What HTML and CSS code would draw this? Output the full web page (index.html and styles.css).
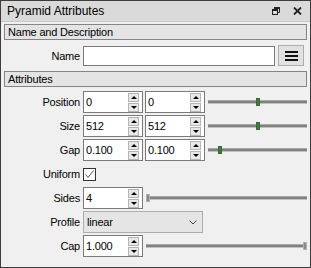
FILE: index.html
```html
<!DOCTYPE html>
<html lang="en">

<head>
    <meta charset="UTF-8">
    <title>Pyramid Attributes</title>
    <link rel="stylesheet" href="styles.css">
</head>

<body>
    <div class="window">
        <div class="titlebar">
            <span class="title">Pyramid Attributes</span>
            <span class="tb_icons">
                <svg width="8" height="8" viewBox="0 0 8 8">
                    <path d="M2.5 2.5V0.5H7.5V5.5H5.5" fill="none" stroke="#222" stroke-width="1" />
                    <rect x="2" y="0" width="6" height="2" fill="#222" />
                    <rect x="0.5" y="2.5" width="5" height="5" fill="none" stroke="#222" stroke-width="1" />
                    <rect x="0" y="2" width="6" height="2" fill="#222" />
                </svg>
                <svg width="9" height="8" viewBox="0 0 9 8">
                    <path d="M1 0.5L8 7.5M8 0.5L1 7.5" stroke="#222" stroke-width="1.8" />
                </svg>
            </span>
        </div>
        <div class="content">
            <div class="section">Name and Description</div>
            <div class="name_row">
                <span class="lbl">Name</span>
                <div class="text_box"></div>
                <div class="menu_btn"><span></span><span></span><span></span></div>
            </div>
            <div class="section sec2">Attributes</div>
            <div class="rows">
                <div class="row">
                    <span class="lbl">Position</span>
                    <div class="spin"><span class="val">0</span><span class="btns"><i class="up"></i><i class="dn"></i></span></div>
                    <div class="spin"><span class="val">0</span><span class="btns"><i class="up"></i><i class="dn"></i></span></div>
                    <div class="slider"><div class="track"></div><div class="handle green" style="--v:0.5"></div></div>
                </div>
                <div class="row">
                    <span class="lbl">Size</span>
                    <div class="spin"><span class="val">512</span><span class="btns"><i class="up"></i><i class="dn"></i></span></div>
                    <div class="spin"><span class="val">512</span><span class="btns"><i class="up"></i><i class="dn"></i></span></div>
                    <div class="slider"><div class="track"></div><div class="handle green" style="--v:0.5"></div></div>
                </div>
                <div class="row">
                    <span class="lbl">Gap</span>
                    <div class="spin"><span class="val">0.100</span><span class="btns"><i class="up"></i><i class="dn"></i></span></div>
                    <div class="spin"><span class="val">0.100</span><span class="btns"><i class="up"></i><i class="dn"></i></span></div>
                    <div class="slider"><div class="track"></div><div class="handle green" style="--v:0.1"></div></div>
                </div>
                <div class="row">
                    <span class="lbl">Uniform</span>
                    <div class="check">
                        <svg width="11" height="11" viewBox="0 0 11 11">
                            <path d="M1.5 5.5L4 8.5L9.5 1.5" fill="none" stroke="#555" stroke-width="1" />
                        </svg>
                    </div>
                </div>
                <div class="row">
                    <span class="lbl">Sides</span>
                    <div class="spin"><span class="val">4</span><span class="btns"><i class="up"></i><i class="dn"></i></span></div>
                    <div class="slider"><div class="track"></div><div class="handle" style="--v:0"></div></div>
                </div>
                <div class="row">
                    <span class="lbl">Profile</span>
                    <div class="combo">
                        <span class="val">linear</span>
                        <svg width="8" height="5" viewBox="0 0 8 5">
                            <path d="M0.5 0.5L4 4L7.5 0.5" fill="none" stroke="#444" stroke-width="1" />
                        </svg>
                    </div>
                </div>
                <div class="row">
                    <span class="lbl">Cap</span>
                    <div class="spin"><span class="val">1.000</span><span class="btns"><i class="up"></i><i class="dn"></i></span></div>
                    <div class="slider"><div class="track"></div><div class="handle" style="--v:1"></div></div>
                </div>
            </div>
        </div>
    </div>
</body>

</html>
```

FILE: styles.css
```css
* {
    box-sizing: border-box;
}

body {
    margin: 0;
    font-family: "Liberation Sans", Arial, sans-serif;
    font-size: 11px;
    color: #000;
}

.window {
    width: 311px;
    height: 268px;
    border: 1px solid #3c3c3c;
    background: #f0f0f0;
}

.titlebar {
    height: 21px;
    background: #dadada;
    border-bottom: 1px solid #c8c8c8;
    display: flex;
    align-items: center;
    padding: 0 8px 0 6px;
}

.title {
    flex: 1;
    font-size: 12px;
}

.tb_icons {
    display: flex;
    align-items: center;
    gap: 13px;
}

.content {
    padding: 2px 3px 0 3px;
    letter-spacing: -0.2px;
}

.section {
    height: 16px;
    border: 1px solid #858585;
    background: #e4e4e4;
    padding-left: 3px;
    line-height: 14px;
}

.sec2 {
    margin-top: 5px;
}

.lbl {
    width: 76px;
    margin-right: 3px;
    text-align: right;
    flex: none;
}

.name_row {
    margin-top: 5px;
    height: 21px;
    display: flex;
    align-items: center;
}

.text_box {
    flex: 1;
    height: 20px;
    margin-top: 1px;
    border: 1px solid #7a7a7a;
    background: #fff;
}

.menu_btn {
    width: 26px;
    height: 21px;
    margin: 0 3px 0 3px;
    border: 1px solid #adadad;
    background: #e1e1e1;
    display: flex;
    flex-direction: column;
    align-items: center;
    justify-content: center;
    gap: 2px;
}

.menu_btn span {
    width: 13px;
    height: 2px;
    background: #111;
}

.rows {
    margin-top: 4px;
    display: flex;
    flex-direction: column;
    gap: 2px;
}

.row {
    height: 22px;
    display: flex;
    align-items: center;
}

.spin {
    width: 60px;
    height: 22px;
    border: 1px solid #7a7a7a;
    background: #fff;
    display: flex;
    align-items: center;
    flex: none;
}

.spin + .spin {
    margin-left: 2px;
}

.spin .val {
    flex: 1;
    padding-left: 2px;
}

.btns {
    width: 11px;
    margin-right: 3px;
    display: flex;
    flex-direction: column;
    gap: 1px;
}

.btns i {
    height: 9px;
    background: #e8e8e8;
    border: 1px solid #b4b4b4;
    display: flex;
    align-items: center;
    justify-content: center;
}

.btns i::after {
    content: "";
    border-left: 3px solid transparent;
    border-right: 3px solid transparent;
}

.btns .up::after {
    border-bottom: 3px solid #000;
}

.btns .dn::after {
    border-top: 3px solid #000;
}

.slider {
    flex: 1;
    height: 10px;
    margin-left: 3px;
    position: relative;
}

.track {
    margin-top: 3px;
    height: 4px;
    background: #808080;
    border-top: 1px solid #aaaaaa;
    border-bottom: 1px solid #c0c0c0;
}

.handle {
    position: absolute;
    top: 1px;
    left: calc(var(--v) * (100% - 4px));
    width: 4px;
    height: 8px;
    background: #8a8a8a;
    border: 1px solid #b0b0b0;
}

.handle.green {
    background: #169a16;
    border-color: #555;
}

.check {
    width: 13px;
    height: 13px;
    border: 1px solid #333;
    background: #fff;
}

.check svg {
    display: block;
}

.combo {
    width: 120px;
    height: 22px;
    border: 1px solid #adadad;
    background: #e5e5e5;
    display: flex;
    align-items: center;
    padding: 0 5px 0 3px;
}

.combo .val {
    flex: 1;
}
```
